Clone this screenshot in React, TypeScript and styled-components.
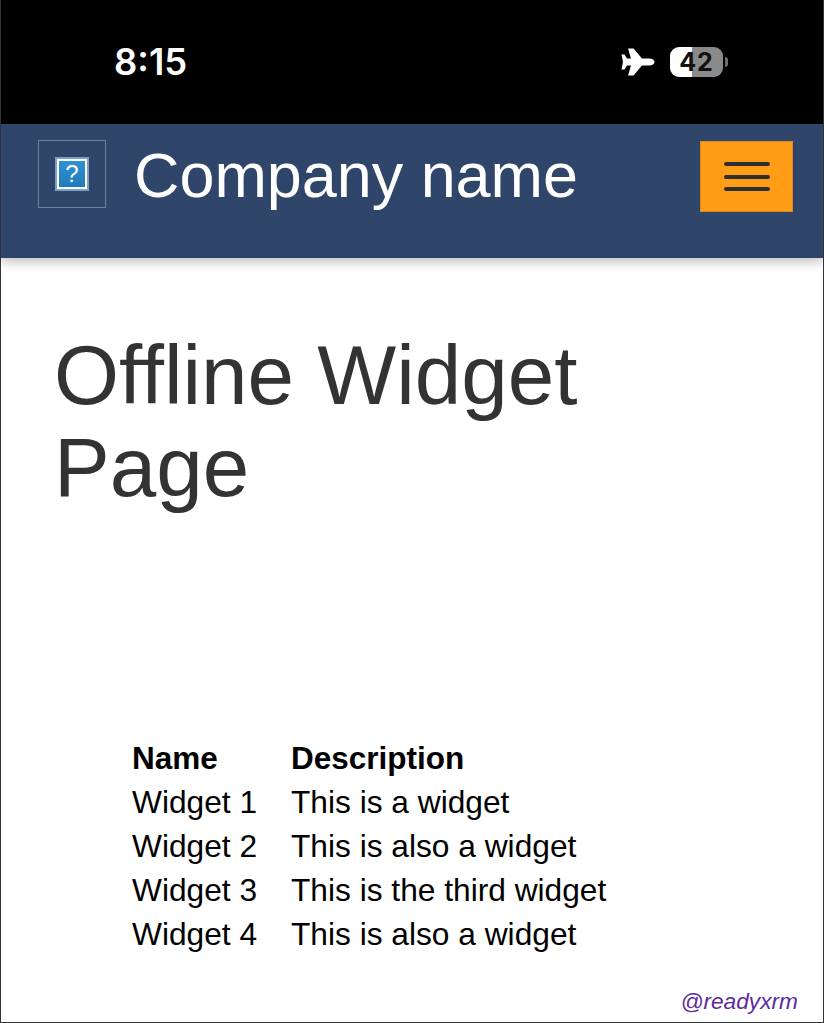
import React from 'react';
import styled, { createGlobalStyle } from 'styled-components';

const GlobalStyle = createGlobalStyle`
  html, body {
    margin: 0;
    padding: 0;
    background: #ffffff;
  }
  * {
    box-sizing: border-box;
  }
`;

const Page = styled.div`
  position: relative;
  width: 824px;
  height: 1023px;
  overflow: hidden;
  background: #ffffff;
  border: 1px solid #333333;
  border-top: none;
  font-family: 'Liberation Sans', Arial, sans-serif;
`;

const StatusBar = styled.div`
  display: flex;
  align-items: center;
  justify-content: space-between;
  height: 124px;
  margin: 0 -1px;
  padding: 0 101px 0 114px;
  background: #000000;
  color: #ffffff;
`;

const Time = styled.div`
  font-family: Inter, 'Liberation Sans', sans-serif;
  font-size: 36.4px;
  font-weight: 600;
  line-height: 40px;
`;

const StatusIcons = styled.div`
  display: flex;
  align-items: center;
  gap: 15px;
`;

const Battery = styled.div`
  position: relative;
  display: flex;
  align-items: center;
  justify-content: center;
  width: 53px;
  height: 30px;
  border-radius: 9px;
  background: linear-gradient(90deg, #ffffff 0 42%, #8a8a8a 42% 100%);
  color: #111111;
  font-family: Inter, 'Liberation Sans', sans-serif;
  font-size: 25px;
  font-weight: 700;
  letter-spacing: 1px;

  &::after {
    content: '';
    position: absolute;
    right: -5px;
    top: 10px;
    width: 3px;
    height: 10px;
    border-radius: 0 3px 3px 0;
    background: #6f6f6f;
  }
`;

const NavBar = styled.header`
  display: flex;
  align-items: flex-start;
  height: 134px;
  padding: 16px 30px 0 37px;
  background: #2f4569;
  box-shadow: 0 4px 10px rgba(0, 0, 0, 0.25);
`;

const LogoBox = styled.div`
  display: flex;
  align-items: center;
  justify-content: center;
  flex-shrink: 0;
  width: 68px;
  height: 68px;
  border: 1px solid rgba(255, 255, 255, 0.32);
`;

const LogoImage = styled.div`
  display: flex;
  align-items: center;
  justify-content: center;
  width: 34px;
  height: 34px;
  border: 2px solid #7f9fc9;
  outline: 2px solid #ffffff;
  outline-offset: -4px;
  background: linear-gradient(180deg, #2f93d6, #1f78b8);
  color: #ffffff;
  font-size: 24px;
  line-height: 1;
`;

const CompanyName = styled.div`
  flex: 1;
  margin-left: 28px;
  color: #ffffff;
  font-size: 62.9px;
  line-height: 70px;
`;

const MenuButton = styled.button`
  display: flex;
  flex-direction: column;
  align-items: center;
  justify-content: center;
  gap: 8.6px;
  width: 93px;
  height: 71px;
  margin-top: 1px;
  padding: 0;
  border: 1px solid #d98a1e;
  background: #ff9e16;
`;

const MenuLine = styled.span`
  display: block;
  width: 46px;
  height: 4px;
  border-radius: 2px;
  background: #2e2e2e;
`;

const Main = styled.main`
  padding: 71px 0 0 53px;
`;

const Heading = styled.h1`
  width: 640px;
  margin: 0;
  color: #333333;
  font-size: 83.6px;
  font-weight: 400;
  line-height: 92px;
`;

const WidgetTable = styled.table`
  margin: 223px 0 0 78px;
  border-collapse: collapse;
  color: #000000;
  font-size: 31.7px;
`;

const HeaderCell = styled.th`
  padding: 0;
  height: 44px;
  min-width: 159px;
  font-size: 31.5px;
  font-weight: 700;
  text-align: left;
`;

const Cell = styled.td`
  padding: 0;
  height: 44px;
`;

const Watermark = styled.div`
  position: absolute;
  right: 25px;
  bottom: 7px;
  color: #5f2b9b;
  font-size: 22.7px;
  font-style: italic;
`;

const widgets = [
  { name: 'Widget 1', description: 'This is a widget' },
  { name: 'Widget 2', description: 'This is also a widget' },
  { name: 'Widget 3', description: 'This is the third widget' },
  { name: 'Widget 4', description: 'This is also a widget' },
];

const AirplaneIcon = () => (
  <svg width="34" height="30" viewBox="0 0 34 28" fill="#ffffff">
    <path d="M0.5 6.5 L3.5 6.5 L6 10.5 L10 10.5 L7 0.5 L12.5 0.5 L21 10.5 L29 10.5 C32 10.5 33.5 12.8 33.5 14 C33.5 15.2 32 17.5 29 17.5 L21 17.5 L12.5 27.5 L7 27.5 L10 17.5 L6 17.5 L3.5 21.5 L0.5 21.5 L2 14 Z" />
  </svg>
);

export default function App() {
  return (
    <Page>
      <GlobalStyle />
      <StatusBar>
        <Time>8:15</Time>
        <StatusIcons>
          <AirplaneIcon />
          <Battery>42</Battery>
        </StatusIcons>
      </StatusBar>
      <NavBar>
        <LogoBox>
          <LogoImage>?</LogoImage>
        </LogoBox>
        <CompanyName>Company name</CompanyName>
        <MenuButton aria-label="Menu">
          <MenuLine />
          <MenuLine />
          <MenuLine />
        </MenuButton>
      </NavBar>
      <Main>
        <Heading>Offline Widget Page</Heading>
        <WidgetTable>
          <thead>
            <tr>
              <HeaderCell>Name</HeaderCell>
              <HeaderCell>Description</HeaderCell>
            </tr>
          </thead>
          <tbody>
            {widgets.map((widget) => (
              <tr key={widget.name}>
                <Cell>{widget.name}</Cell>
                <Cell>{widget.description}</Cell>
              </tr>
            ))}
          </tbody>
        </WidgetTable>
      </Main>
      <Watermark>@readyxrm</Watermark>
    </Page>
  );
}
